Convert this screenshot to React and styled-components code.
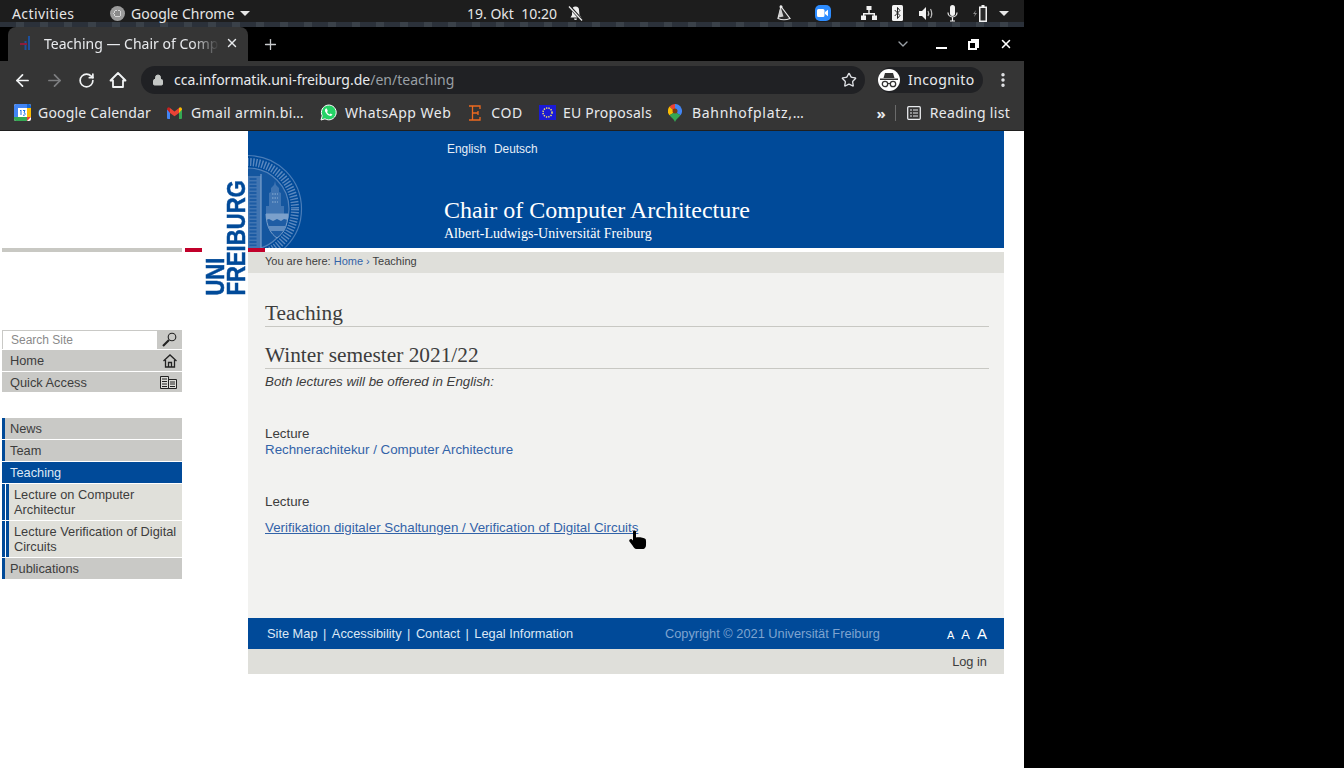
import React from 'react'
import styled, { createGlobalStyle } from 'styled-components'
import { ArrowLeft, ArrowRight, RotateCw, Lock, Star, MoreVertical, X, Plus, ChevronDown } from 'lucide-react'

const GlobalStyle = createGlobalStyle`
html, body {
  margin: 0;
  padding: 0;
  background: #000;
  overflow: hidden;
}
* { box-sizing: border-box; }
`

const uiFont = `"Noto Sans", "DejaVu Sans", sans-serif`
const webFont = `"Liberation Sans", Arial, sans-serif`
const serifFont = `"Liberation Serif", "Times New Roman", serif`

const bookmarks = [
  { id: 'cal', label: 'Google Calendar', gap: 7, spacing: 0.2, after: 16 },
  { id: 'gmail', label: 'Gmail armin.bi…', gap: 9, spacing: 0.33, after: 16 },
  { id: 'whatsapp', label: 'WhatsApp Web', gap: 8, spacing: 0.5, after: 18 },
  { id: 'cod', label: 'COD', gap: 10, spacing: 0.6, after: 16 },
  { id: 'eu', label: 'EU Proposals', gap: 7, spacing: 0.25, after: 16 },
  { id: 'maps', label: 'Bahnhofplatz,…', gap: 10, spacing: 0.7, after: 0 },
]

const BookmarkIcon = ({ id }) => {
  if (id === 'cal') return (
    <svg width="17" height="17" viewBox="0 0 17 17">
      <rect width="17" height="17" rx="2" fill="#fff" />
      <path d="M0 2a2 2 0 0 1 2-2h11v4H4v9H0z" fill="#4285f4" />
      <path d="M13 0h2a2 2 0 0 1 2 2v2h-4z" fill="#1967d2" />
      <path d="M13 4h4v9h-4z" fill="#fbbc04" />
      <path d="M4 13h9v4H2a2 2 0 0 1-2-2v-2z" fill="#34a853" />
      <path d="M13 13h4l-4 4z" fill="#ea4335" />
      <path d="M6 7l1-1v5M9 6.500h2l-1 2q1.500 .3 1 2t-2 .5" stroke="#1a73e8" strokeWidth="1" fill="none" />
    </svg>
  )
  if (id === 'gmail') return (
    <svg width="15" height="12" viewBox="0 0 15 12">
      <path d="M0 2v9a1 1 0 0 0 1 1h2V5z" fill="#4285f4" />
      <path d="M15 2v9a1 1 0 0 1-1 1h-2V5z" fill="#34a853" />
      <path d="M3 6V1L7.500 4.500 12 1v5L7.500 9.200z" fill="#ea4335" />
      <path d="M0 2.500C0 .5 2 -.5 3 1v5z" fill="#c5221f" />
      <path d="M15 2.500C15 .5 13 -.5 12 1v5z" fill="#fbbc04" />
    </svg>
  )
  if (id === 'whatsapp') return (
    <svg width="17" height="17" viewBox="0 0 17 17">
      <path d="M1 16l1.200-4.200A7.400 7.400 0 1 1 5 14.800z" fill="#25d366" stroke="#fff" strokeWidth="1" />
      <path d="M6 4.500c-1 .6-1.400 2 -.6 3.500 1 1.900 2.500 3.200 4.200 3.800 1.400.4 2.500-.3 2.800-1.300l-1.900-1.100-.9 1c-1.200-.5-2-1.300-2.600-2.500l.8-1-1-2.300z" fill="#fff" />
    </svg>
  )
  if (id === 'cod') return (
    <svg width="12" height="16" viewBox="0 0 12 16">
      <path d="M1 1h10v3M1 15h10v-3M3.500 1v14M3.500 8H9M9 6v4M0 1h4M0 15h4" stroke="#ed6a1f" strokeWidth="1.300" fill="none" />
    </svg>
  )
  if (id === 'eu') return (
    <svg width="17" height="15" viewBox="0 0 17 15">
      <rect width="17" height="15" fill="#1a1ad6" />
      <circle cx="8.500" cy="7.500" r="4.500" fill="none" stroke="#f5e663" strokeWidth="1.500" strokeDasharray="1.300 1.100" />
    </svg>
  )
  return (
    <svg width="14" height="18" viewBox="0 0 14 18">
      <path d="M7 0a7 7 0 0 1 5.500 11.300L7 8z" fill="#4285f4" />
      <path d="M7 0a7 7 0 0 0-5.500 2.600L7 8z" fill="#ea4335" />
      <path d="M1.500 2.600A7 7 0 0 0 1.500 11.300L7 8z" fill="#fbbc04" />
      <path d="M1.500 11.300C3.500 14 6 15 7 18c1-3 3.500-4 5.500-6.700L7 8z" fill="#34a853" />
      <circle cx="7" cy="7" r="2.500" fill="#7a3b12" />
    </svg>
  )
}

const Seal = () => (
  <SealSvg viewBox="0 0 56 94">
    <circle cx="0" cy="55" r="53.500" fill="none" stroke="#4a7db8" strokeWidth="1.200" />
    <circle cx="0" cy="55" r="47" fill="none" stroke="#5a88bf" strokeWidth="8" strokeDasharray="1.400 1.500" />
    <circle cx="0" cy="55" r="41" fill="#14569f" stroke="#5483bb" strokeWidth="1.200" />
    <path d="M0 22h13v72H0z" fill="#4175b2" />
    <path d="M5 24v68" stroke="#1d5ca4" strokeWidth="7" strokeDasharray="2 1.500" />
    <path d="M13 20v74" stroke="#7ba0cb" strokeWidth="1.200" />
    <path d="M21 52V39l2-1v-4l3-3 1-4 1 4 3 3v4l2 1v13h3v8H18v-8z" fill="#3f74b2" />
    <path d="M24 40h6M24 44h6M24 48h6" stroke="#8fb0d4" strokeWidth="1" strokeDasharray="1.500 1" />
    <path d="M18 60h22c-.5 13-5 20-11 24-6-4-10.500-11-11-24z" fill="#1d5ca4" stroke="#7ba0cb" strokeWidth="1" />
    <path d="M18 60h22v6l-4-1-3 2-4-2-4 2-4-2-3 1z" fill="#7ba0cb" />
    <path d="M20 72h18l-2 5H22z" fill="#5f8cc0" />
  </SealSvg>
)

const TrayIcons = () => (
  <Tray>
    <svg width="16" height="16" viewBox="0 0 16 16" style={{ marginRight: 23 }}>
      <path d="M5 1.500L14 13.500Q8 16 2 13.500z" fill="#2a2a2a" stroke="#e8e8e8" strokeWidth="1.200" />
      <path d="M4.500 1.500l-2 11 5-1z" fill="#cfcfcf" />
      <circle cx="5" cy="1.800" r="1.500" fill="#eee" />
    </svg>
    <ZoomIcon>
      <svg width="11" height="8" viewBox="0 0 11 8"><path d="M0 1.500A1.500 1.500 0 0 1 1.500 0H6a1.500 1.500 0 0 1 1.500 1.500v5A1.500 1.500 0 0 1 6 8H1.500A1.500 1.500 0 0 1 0 6.500zM8 3l3-2.200v6.400L8 5z" fill="#fff" /></svg>
    </ZoomIcon>
    <svg width="16" height="14" viewBox="0 0 16 14" style={{ marginLeft: 30 }}>
      <path d="M5.500 0h5v4h-5zM0 9.500h5V14H0zM11 9.500h5V14h-5zM7.300 4h1.400v3H14v3h-1.400V8.400H3.400V10H2V7h5.300z" fill="#f2f2f2" />
    </svg>
    <svg width="11" height="16" viewBox="0 0 11 16" style={{ marginLeft: 15 }}>
      <rect width="11" height="16" rx="1.500" fill="#f2f2f2" />
      <path d="M2.700 5l5.200 5.500-2.400 3V2.500l2.400 3-5.200 5.500" fill="none" stroke="#222" strokeWidth="1" />
    </svg>
    <svg width="15" height="13" viewBox="0 0 15 13" style={{ marginLeft: 16 }}>
      <path d="M0 4h3l4-4v13l-4-4H0z" fill="#f2f2f2" />
      <path d="M9 4q1.500 2.500 0 5M11.500 2q2.500 4.500 0 9" fill="none" stroke="#bbb" strokeWidth="1.200" />
    </svg>
    <svg width="11" height="17" viewBox="0 0 11 17" style={{ marginLeft: 13 }}>
      <rect x="3" width="5" height="11" rx="2.500" fill="#f2f2f2" />
      <path d="M1 7.500a4.500 4.500 0 0 0 9 0M5.500 12v4M3 16h5" fill="none" stroke="#f2f2f2" strokeWidth="1.200" />
    </svg>
    <svg width="15" height="17" viewBox="0 0 15 17" style={{ marginLeft: 15 }}>
      <path d="M3 5L0 9h2l-1 3 3-4H2z" fill="#8a8a8a" />
      <path d="M8.500 0h3v1.500H14V17H6V1.500h2.500z" fill="#f2f2f2" />
      <path d="M7.500 3h5v12.500h-5z" fill="#2a2a2a" />
    </svg>
    <Caret style={{ marginLeft: 11 }} />
  </Tray>
)

const PointerHand = () => (
  <HandSvg viewBox="0 0 18 20">
    <path d="M4 2c0-2 3-2 3 0v5.500c2-.5 8 0 9.500 1.500.8 1 .5 4 .5 6 0 2-1 3.500-2.500 4H7.500C5.500 19 5 17.500 3.500 15.500L.5 11.500C-.5 10 1.500 8.300 3 9.500l1 1z" fill="#000" />
  </HandSvg>
)

const App = () => {
  return (
    <Screen>
      <GlobalStyle />
      <TopBar>
        <Activities>Activities</Activities>
        <AppMenu>
          <ChromeIcon />
          Google Chrome
          <Caret />
        </AppMenu>
        <Clock>19. Okt&nbsp;&nbsp;10:20</Clock>
        <svg width="15" height="15" viewBox="0 0 15 15" style={{ marginLeft: 11 }}>
          <path d="M4 4a3.500 3.500 0 0 1 7 0l.5 5 2 2.500h-11L4 9zM6 12.500a1.500 1.500 0 0 0 3 0z" fill="#eee" />
          <path d="M1.500 .5L14 14.500" stroke="#1d1d1d" strokeWidth="3" />
          <path d="M1 .5L14 14.500" stroke="#eee" strokeWidth="1.300" />
        </svg>
        <TrayIcons />
      </TopBar>
      <DesktopStrip />
      <TabStrip>
        <Tab>
          <svg width="20" height="16" viewBox="0 0 20 16">
            <path d="M11 1v14M7.500 6v9" stroke="#1c4f9c" strokeWidth="2" />
            <path d="M2 9h7" stroke="#8c1d3a" strokeWidth="2" />
          </svg>
          <TabTitle>Teaching — Chair of Comp</TabTitle>
          <X size={14} color="#e8eaed" strokeWidth={2.4} />
        </Tab>
        <NewTab><Plus size={17} strokeWidth={1.800} /></NewTab>
        <WindowControls>
          <ChevronDown size={16} color="#9aa0a6" />
          <svg width="11" height="2" viewBox="0 0 11 2" style={{ marginLeft: 25, marginTop: 8 }}><rect width="11" height="2" fill="#fff" /></svg>
          <svg width="11" height="11" viewBox="0 0 11 11" style={{ marginLeft: 21 }}>
            <path d="M3 1h7v7H8M1 3h7v7H1z" fill="none" stroke="#fff" strokeWidth="2" />
          </svg>
          <X size={14} color="#fff" strokeWidth={2.6} style={{ marginLeft: 20 }} />
        </WindowControls>
      </TabStrip>
      <Toolbar>
        <NavButton><ArrowLeft size={19} strokeWidth={2.200} /></NavButton>
        <NavButton $muted><ArrowRight size={19} strokeWidth={2.200} /></NavButton>
        <NavButton><RotateCw size={17} strokeWidth={2.400} /></NavButton>
        <NavButton>
          <svg width="18" height="18" viewBox="0 0 18 18">
            <path d="M9 2L1.500 9.500H4V16h10V9.500h2.500z" fill="none" stroke="#f1f3f4" strokeWidth="1.800" strokeLinejoin="round" />
          </svg>
        </NavButton>
        <Omnibox>
          <Lock size={12} color="#c4c7c5" fill="#c4c7c5" />
          <Url>cca.informatik.uni-freiburg.de<UrlPath>/en/teaching</UrlPath></Url>
          <Star size={16} color="#dfe1e5" />
        </Omnibox>
        <IncognitoPill>
          <IncognitoAvatar>
            <svg width="18" height="16" viewBox="0 0 18 16">
              <path d="M5 1h8l1.500 5H3.500zM0 6.500h18V8H0z" fill="#333" />
              <circle cx="5" cy="12" r="2.700" fill="none" stroke="#333" strokeWidth="1.300" />
              <circle cx="13" cy="12" r="2.700" fill="none" stroke="#333" strokeWidth="1.300" />
              <path d="M7.700 11.500h2.600" stroke="#333" strokeWidth="1.200" />
            </svg>
          </IncognitoAvatar>
          <IncognitoLabel>Incognito</IncognitoLabel>
        </IncognitoPill>
        <MoreVertical size={18} color="#e8eaed" strokeWidth={2.600} />
      </Toolbar>
      <BookmarkBar>
        {bookmarks.map((b) => (
          <Bookmark key={b.id} $gap={b.gap} $spacing={b.spacing} $after={b.after}>
            <BookmarkIcon id={b.id} />
            {b.label}
          </Bookmark>
        ))}
        <Chevrons>»</Chevrons>
        <BarDivider />
        <ReadingList>
          <svg width="14" height="14" viewBox="0 0 14 14">
            <rect x=".7" y=".7" width="12.600" height="12.600" rx="1" fill="none" stroke="#e8eaed" strokeWidth="1.300" />
            <path d="M3 4h2M3 7h2M3 10h2M6 4h5M6 7h5M6 10h5" stroke="#e8eaed" strokeWidth="1.200" />
          </svg>
          Reading list
        </ReadingList>
      </BookmarkBar>

      <Page>
        <Sidebar>
          <Logo>UNI<br />FREIBURG</Logo>
          <BrandRule>
            <GreyBar />
            <RedBar />
          </BrandRule>
          <Tools>
            <SearchRow>
              <SearchInput>Search Site</SearchInput>
              <SearchButton>
                <svg width="15" height="15" viewBox="0 0 15 15">
                  <circle cx="10" cy="5" r="3.800" fill="none" stroke="#222" strokeWidth="1.100" />
                  <path d="M7 8L1 14" stroke="#222" strokeWidth="2.200" />
                </svg>
              </SearchButton>
            </SearchRow>
            <ToolRow>
              Home
              <svg width="14" height="14" viewBox="0 0 14 14">
                <path d="M.5 7L7 1l6.500 6M2.500 6v7h9V6M5.500 13V8.500h3V13" fill="none" stroke="#222" strokeWidth="1.300" />
              </svg>
            </ToolRow>
            <ToolRow $height={20}>
              Quick Access
              <svg width="17" height="13" viewBox="0 0 17 13">
                <path d="M.5 .5h8v12h-8zM8.500 3.500h8v9h-8z" fill="#dcdcd8" stroke="#222" strokeWidth="1" />
                <path d="M2 3h5M2 5.500h5M2 8h5M2 10.500h5M10 6h5M10 8h5M10 10.500h5" stroke="#222" strokeWidth="1" />
              </svg>
            </ToolRow>
          </Tools>
          <Nav>
            <NavItem>News</NavItem>
            <NavItem>Team</NavItem>
            <NavItem $active>Teaching</NavItem>
            <SubItem>Lecture on Computer Architectur</SubItem>
            <SubItem>Lecture Verification of Digital Circuits</SubItem>
            <NavItem>Publications</NavItem>
          </Nav>
        </Sidebar>

        <Main>
          <Header>
            <Seal />
            <Languages>
              <span>English</span>
              <span>Deutsch</span>
            </Languages>
            <SiteTitle>Chair of Computer Architecture</SiteTitle>
            <SiteSub>Albert-Ludwigs-Universität Freiburg</SiteSub>
          </Header>
          <WhiteStrip><RedBar /></WhiteStrip>
          <Breadcrumb>
            You are here: <Crumb>Home ›</Crumb> Teaching
          </Breadcrumb>
          <Content>
            <PageTitle>Teaching</PageTitle>
            <Section>Winter semester 2021/22</Section>
            <Intro>Both lectures will be offered in English:</Intro>
            <Label $top={37}>Lecture</Label>
            <CourseLink>Rechnerachitekur / Computer Architecture</CourseLink>
            <Label $top={36}>Lecture</Label>
            <CourseLink $hover $top={10}>Verifikation digitaler Schaltungen / Verification of Digital Circuits</CourseLink>
            <PointerHand />
          </Content>
          <Footer>
            <FooterLinks>
              <span>Site Map</span><i>|</i>
              <span>Accessibility</span><i>|</i>
              <span>Contact</span><i>|</i>
              <span>Legal Information</span>
            </FooterLinks>
            <Copyright>Copyright © 2021 Universität Freiburg</Copyright>
            <FontSizes>
              <FontSize $size={11}>A</FontSize>
              <FontSize $size={13}>A</FontSize>
              <FontSize $size={15}>A</FontSize>
            </FontSizes>
          </Footer>
          <LoginBar>Log in</LoginBar>
        </Main>
      </Page>
    </Screen>
  )
}

const Screen = styled.div`
position: relative;
width: 1024px;
height: 768px;
background: #fff;
overflow: hidden;
`
const TopBar = styled.div`
display: flex;
align-items: center;
height: 22px;
padding: 4px 0 0 12px;
background: #1d1d1d;
color: #e6e6e6;
font: 14px ${uiFont};
`
const Activities = styled.div`
width: 98px;
letter-spacing: .4px;
`
const AppMenu = styled.div`
display: flex;
align-items: center;
width: 357px;
gap: 6px;
`
const ChromeIcon = styled.span`
width: 15px;
height: 15px;
border-radius: 50%;
background: radial-gradient(circle, #8a8a8a 0 3px, #d6d6d6 3px 4px, #9b9b9b 4px);
`
const Caret = styled.span`
width: 0;
height: 0;
border-left: 5px solid transparent;
border-right: 5px solid transparent;
border-top: 5px solid #e6e6e6;
`
const Clock = styled.div`
white-space: nowrap;
`
const Tray = styled.div`
display: flex;
align-items: center;
margin-left: 193px;
`
const ZoomIcon = styled.span`
display: flex;
align-items: center;
justify-content: center;
width: 16px;
height: 16px;
border-radius: 5px;
background: #2d8cff;
`
const DesktopStrip = styled.div`
height: 5px;
background: repeating-linear-gradient(90deg, #2b313a 0 16px, #3a4149 16px 24px);
`
const TabStrip = styled.div`
display: flex;
align-items: flex-end;
height: 34px;
padding-left: 8px;
background: #000;
`
const Tab = styled.div`
display: flex;
align-items: center;
gap: 6px;
width: 240px;
height: 34px;
padding: 0 9px 2px 10px;
background: #353535;
border-radius: 8px 8px 0 0;
color: #e8eaed;
font: 14px ${uiFont};
`
const TabTitle = styled.span`
flex: 1;
white-space: nowrap;
-webkit-mask-image: linear-gradient(90deg, #000 85%, transparent);
mask-image: linear-gradient(90deg, #000 85%, transparent);
`
const NewTab = styled.div`
display: flex;
align-items: center;
justify-content: center;
width: 44px;
height: 34px;
color: #c8cacd;
`
const WindowControls = styled.div`
display: flex;
align-items: center;
height: 34px;
margin-left: auto;
padding-right: 11px;
`
const Toolbar = styled.div`
display: flex;
align-items: center;
height: 36px;
padding: 2px 12px 0 6px;
background: #353535;
`
const NavButton = styled.div`
display: flex;
align-items: center;
justify-content: center;
width: 32px;
color: ${(p) => (p.$muted ? '#7d7e80' : '#f1f3f4')};
`
const Omnibox = styled.div`
display: flex;
align-items: center;
width: 724px;
height: 28px;
margin-left: 7px;
padding: 0 8px 0 11px;
background: #202124;
border-radius: 14px;
`
const Url = styled.div`
flex: 1;
margin-left: 10px;
padding-bottom: 2px;
color: #e8eaed;
font: 14px ${uiFont};
`
const UrlPath = styled.span`
color: #9aa0a6;
`
const IncognitoPill = styled.div`
display: flex;
align-items: center;
gap: 8px;
width: 105px;
height: 26px;
margin: 0 11px 0 13px;
background: #202124;
border-radius: 13px;
`
const IncognitoLabel = styled.span`
padding-bottom: 2px;
color: #e8eaed;
font: 14px ${uiFont};
letter-spacing: .4px;
`
const IncognitoAvatar = styled.span`
display: flex;
align-items: center;
justify-content: center;
width: 22px;
height: 22px;
border-radius: 50%;
background: #fff;
`
const BookmarkBar = styled.div`
display: flex;
align-items: center;
height: 34px;
padding: 0 14px 2px;
background: #353535;
border-bottom: 1px solid #1f1f1f;
`
const Bookmark = styled.div`
display: flex;
align-items: center;
gap: ${(p) => p.$gap}px;
margin-right: ${(p) => p.$after}px;
color: #e8eaed;
font: 14px ${uiFont};
letter-spacing: ${(p) => p.$spacing}px;
white-space: nowrap;
`
const Chevrons = styled.div`
margin-left: auto;
color: #e8eaed;
font: bold 15px ${uiFont};
`
const BarDivider = styled.div`
width: 1px;
height: 16px;
margin: 0 11px 0 9px;
background: #6b6b6b;
`
const ReadingList = styled.div`
display: flex;
align-items: center;
gap: 9px;
color: #e8eaed;
font: 14px ${uiFont};
letter-spacing: .3px;
`
const Page = styled.div`
display: flex;
align-items: flex-start;
width: 1004px;
font: 12.8px ${webFont};
color: #3d3d3d;
`
const Sidebar = styled.div`
position: relative;
flex: none;
width: 248px;
padding: 117px 0 0 2px;
`
const Logo = styled.div`
position: absolute;
top: 39px;
left: 205px;
color: #004a99;
font: bold 26px/21px ${webFont};
-webkit-text-stroke: .5px #004a99;
writing-mode: vertical-rl;
white-space: nowrap;
transform: rotate(180deg) scaleY(.85);
`
const BrandRule = styled.div`
display: flex;
gap: 3px;
height: 4px;
`
const GreyBar = styled.div`
width: 180px;
background: #c8c8c3;
`
const RedBar = styled.div`
width: 17px;
background: #c1002a;
`
const Tools = styled.div`
display: flex;
flex-direction: column;
gap: 1px;
width: 180px;
margin-top: 78px;
`
const SearchRow = styled.div`
display: flex;
height: 19px;
background: #c9c9c6;
`
const SearchInput = styled.div`
flex: 1;
margin: 1px 0 0 1px;
padding-left: 8px;
background: #fff;
color: #8a8a8a;
font-size: 12px;
line-height: 19px;
height: 18px;
`
const SearchButton = styled.div`
display: flex;
align-items: center;
justify-content: center;
width: 25px;
`
const ToolRow = styled.div`
display: flex;
align-items: center;
justify-content: space-between;
height: ${(p) => p.$height || 21}px;
padding: 0 5px 0 8px;
background: #c9c9c6;
`
const Nav = styled.div`
display: flex;
flex-direction: column;
width: 180px;
margin-top: 26px;
`
const NavItem = styled.div`
height: 21px;
margin-bottom: 1px;
padding-left: 5px;
border-left: 3px solid #004a99;
background: ${(p) => (p.$active ? '#004a99' : '#c9c9c6')};
color: ${(p) => (p.$active ? '#dce8f5' : '#3d3d3d')};
line-height: 21px;
`
const SubItem = styled.div`
height: 36px;
margin-bottom: 1px;
padding: 3px 0 3px 9px;
border-left: 3px solid #004a99;
box-shadow: inset 1px 0 0 #fff, inset 4px 0 0 #004a99;
background: #e0e0da;
line-height: 15px;
`
const Main = styled.div`
flex: none;
width: 756px;
`
const Header = styled.div`
position: relative;
display: flex;
flex-direction: column;
height: 117px;
padding: 11px 0 0 196px;
background: #004a99;
color: #fff;
`
const SealSvg = styled.svg`
position: absolute;
left: 0;
top: 23px;
width: 56px;
height: 94px;
`
const Languages = styled.div`
display: flex;
gap: 8px;
padding-left: 3px;
font: 11.9px/14px ${webFont};
color: #e6eef8;
`
const SiteTitle = styled.div`
margin-top: 40px;
font: 24px/28px ${serifFont};
`
const SiteSub = styled.div`
margin-top: 1px;
font: 14px/17px ${serifFont};
`
const WhiteStrip = styled.div`
display: flex;
height: 4px;
background: #fff;
`
const Breadcrumb = styled.div`
height: 21px;
padding-left: 17px;
background: #dfdfda;
font-size: 11px;
line-height: 18px;
`
const Crumb = styled.span`
color: #3263a8;
`
const Content = styled.div`
position: relative;
height: 345px;
padding: 26px 15px 0 17px;
background: #f2f2f0;
font-size: 13.33px;
`
const PageTitle = styled.h1`
margin: 0;
padding: 2px 0 1px;
border-bottom: 1px solid #c8c8c3;
font: 21.33px/24px ${serifFont};
color: #3d3d3d;
`
const Section = styled.h2`
margin: 15px 0 0;
padding: 2px 0 1px;
border-bottom: 1px solid #c8c8c3;
font: 21.33px/23px ${serifFont};
color: #3d3d3d;
`
const Intro = styled.div`
margin-top: 5px;
font-style: italic;
line-height: 15px;
`
const Label = styled.div`
margin-top: ${(p) => p.$top}px;
line-height: 16px;
`
const CourseLink = styled.div`
margin-top: ${(p) => p.$top || 0}px;
color: #3263a8;
line-height: 16px;
text-decoration: ${(p) => (p.$hover ? 'underline' : 'none')};
`
const HandSvg = styled.svg`
position: absolute;
left: 381px;
top: 257px;
width: 18px;
height: 20px;
`
const Footer = styled.div`
display: flex;
align-items: center;
height: 31px;
padding: 0 17px 0 19px;
background: #004a99;
color: #dce8f5;
`
const FooterLinks = styled.div`
display: flex;
gap: 5.5px;
width: 398px;
i { font-style: normal; }
`
const Copyright = styled.div`
color: #7ea4d0;
`
const FontSizes = styled.div`
display: flex;
align-items: baseline;
gap: 7px;
margin-left: auto;
`
const FontSize = styled.span`
font-size: ${(p) => p.$size}px;
color: #fff;
`
const LoginBar = styled.div`
height: 25px;
padding-right: 17px;
background: #dfdfda;
text-align: right;
line-height: 25px;
`

export default App
